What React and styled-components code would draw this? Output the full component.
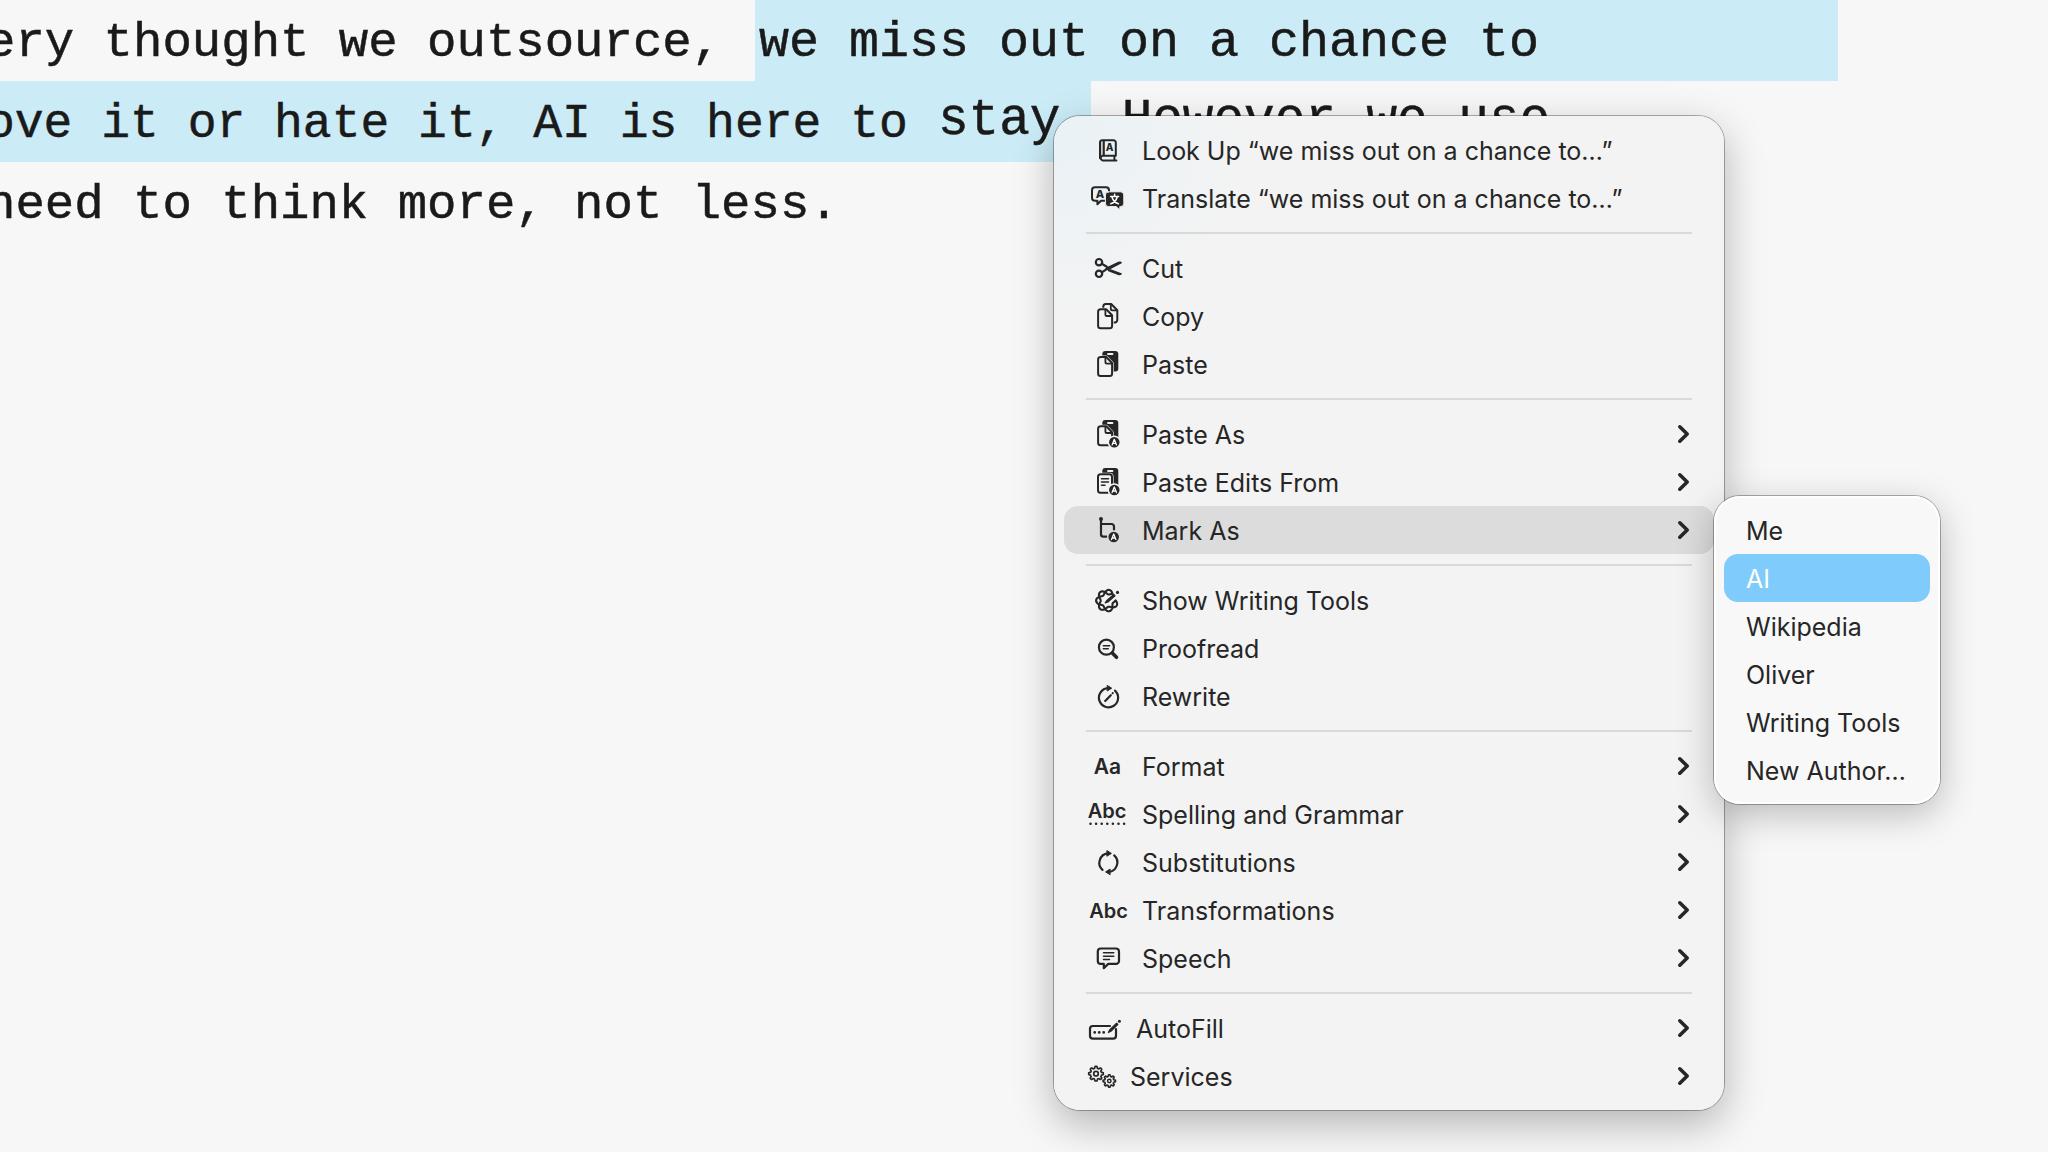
import React from "react";
import styled, { createGlobalStyle, css } from "styled-components";

const INK = "#262626";
const PANEL = "#f3f3f3";

const GlobalStyle = createGlobalStyle`
  * { box-sizing: border-box; }
  body { margin: 0; background: #f7f7f7; }
`;

const Page = styled.main`
  position: relative;
  min-height: 100vh;
  overflow: hidden;
  background: #f7f7f7;
`;

const Editor = styled.article`
  margin-left: -14px;
  font-family: "Liberation Mono", "Courier New", monospace;
  color: #1a1a1a;
`;

const Line = styled.p`
  display: flex;
  align-items: flex-start;
  height: 81px;
  margin: 0;
  white-space: pre;
`;

const Run = styled.span`
  flex: none;
  font-size: ${(p) => p.$size}px;
  line-height: ${(p) => (p.$raised ? 80 : 86)}px;
  -webkit-text-stroke: 0.5px currentColor;
`;

const Lead = styled(Run)`
  width: 769px;
`;

const Marked = styled(Run)`
  height: 81px;
  background: #cbecf7;
  ${(p) => p.$wide && css`width: 1083px; padding-left: 4px;`}
`;

const MarkedStart = styled(Marked)`
  width: 952px;
`;

const panel = css`
  position: absolute;
  display: flex;
  flex-direction: column;
  margin: 0;
  padding: 10px;
  list-style: none;
  font-family: Inter, "Liberation Sans", sans-serif;
  color: ${INK};
`;

const Menu = styled.ul`
  ${panel}
  top: 116px;
  left: 1054px;
  width: 670px;
  border-radius: 26px;
  background: radial-gradient(circle at 0 0, #e9f2f6 0, ${PANEL} 200px);
  box-shadow: 0 0 0 1px rgba(0, 0, 0, 0.3), 0 14px 40px rgba(0, 0, 0, 0.28);
`;

const SubMenu = styled.ul`
  ${panel}
  top: -10px;
  left: 100%;
  width: 226px;
  border-radius: 26px;
  background: #f8f8f8;
  box-shadow: inset 0 0 0 2px #ffffff, 0 0 0 1px rgba(0, 0, 0, 0.3), 0 10px 36px rgba(0, 0, 0, 0.25);
`;

const Entry = styled.li`
  position: relative;
`;

const Item = styled.button`
  display: flex;
  align-items: center;
  gap: 14px;
  width: 100%;
  height: 48px;
  margin: 0;
  padding: 0 24px;
  border: 0;
  border-radius: 14px;
  background: ${(p) => (p.$open ? "#dcdcdc" : "transparent")};
  font: inherit;
  font-size: 25px;
  line-height: 32px;
  color: inherit;
  text-align: left;
  white-space: nowrap;
`;

const SubItem = styled(Item)`
  padding: 0 22px;
  ${(p) => p.$chosen && css`background: #7fcbfb; color: #ffffff;`}
`;

const Label = styled.span`
  flex: 1;
  padding-top: 2px;
`;

const Divider = styled.li`
  height: 2px;
  margin: 10px 22px;
  background: #d9d9d9;
`;

const Icon = styled.svg`
  flex: none;
  width: ${(p) => p.$width || 40}px;
  height: 40px;
  overflow: visible;
  fill: none;
  stroke: ${INK};
  stroke-width: 2;
  stroke-linecap: round;
  stroke-linejoin: round;

  text {
    fill: ${INK};
    stroke: none;
    font-weight: 600;
    text-anchor: middle;
  }
`;

const Arrow = styled.svg`
  flex: none;
  width: 14px;
  height: 18px;
  overflow: visible;
  fill: none;
  stroke: ${INK};
  stroke-width: 3.6;
  stroke-linecap: round;
  stroke-linejoin: round;
`;

const Chevron = () => (
  <Arrow viewBox="0 0 14 18" aria-hidden="true">
    <path d="M3.8 1.8l7.400 7.200-7.400 7.200" />
  </Arrow>
);

const ring = (cx, cy, point, steps, from = 0, to = 1) => {
  const out = [];
  for (let i = 0; i <= steps; i += 1) {
    const t = (from + ((to - from) * i) / steps) * Math.PI * 2;
    const [x, y] = point(t);
    out.push(`${i ? "L" : "M"}${(cx + x).toFixed(2)} ${(cy + y).toFixed(2)}`);
  }
  return out.join("");
};

/* Two strands that cross seven times per turn; the last loop is left open. */
const strand = (side) =>
  ring(
    19,
    20.6,
    (t) => {
      const r = 8.6 + side * 2.3 * Math.sin(3.5 * t);
      return [r * Math.cos(t), r * Math.sin(t)];
    },
    160,
    0,
    6 / 7
  );

const gear = (cx, cy, r, depth, teeth) =>
  ring(
    cx,
    cy,
    (t) => {
      const d = r + depth * Math.max(-1, Math.min(1, 2 * Math.cos(teeth * t)));
      return [d * Math.cos(t), d * Math.sin(t)];
    },
    160
  );

const Badge = ({ x, y, bg = PANEL }) => (
  <>
    <circle cx={x} cy={y} r="6" fill={INK} stroke={bg} strokeWidth="1.5" />
    <path d={`M${x - 2.2} ${y + 2.6}l2.2-5.6 2.2 5.6m-3.6-1.6h2.8`} stroke="#fff" strokeWidth="1.3" />
  </>
);

const ClipBack = ({ y }) => (
  <>
    <rect x="14.3" y={y} width="16" height="20.5" rx="3" fill={INK} stroke="none" />
    <path d={`M20 ${y + 3}h4.5`} stroke={PANEL} strokeWidth="1.8" />
  </>
);

const pageShape = (y) =>
  `M12.5 ${y}h5.7l5.9 6v10.5a2.5 2.5 0 0 1-2.5 2.5h-9a2.5 2.5 0 0 1-2.500-2.500v-14a2.500 2.500 0 0 1 2.500-2.500z`;

const FrontPage = ({ y }) => (
  <>
    <path d={pageShape(y)} stroke={PANEL} strokeWidth="3.2" />
    <path d={pageShape(y)} fill={PANEL} />
    <path d={`M17.4 ${y + 0.5}v4.6a1.6 1.6 0 0 0 1.6 1.6h4.6`} strokeWidth="1.8" />
  </>
);

const icons = {
  book: (
    <>
      <path d="M15.6 11v14.6H12V12z" fill="#c4c6c7" stroke="none" />
      <path d="M12 28.2V12.6a2.4 2.4 0 0 1 2.4-2.4h11a2.4 2.4 0 0 1 2.4 2.4v13.2H14.4a2.4 2.4 0 0 0 0 4.6h14M15.8 10.4v15M26.4 26v4" />
      <text x="21.6" y="21.4" fontSize="10" style={{ fontWeight: 800 }}>A</text>
    </>
  ),
  translate: (
    <>
      <path d="M7 9.3h11a3 3 0 0 1 3 3v7.4a3 3 0 0 1-3 3h-5l-3.6 3.6v-3.6H7a3 3 0 0 1-3-3v-7.4a3 3 0 0 1 3-3z" />
      <text x="12" y="20" fontSize="11" style={{ fontWeight: 800 }}>A</text>
      <path d="M20.6 13.8h12a3.2 3.2 0 0 1 3.2 3.2v8.4a3.2 3.2 0 0 1-3.2 3.2h-.8v3.4l-3.6-3.4h-7.6a3.2 3.2 0 0 1-3.2-3.2V17a3.2 3.2 0 0 1 3.2-3.2z" fill={INK} stroke={PANEL} strokeWidth="1" />
      <path d="M26.6 16.2v2M22.6 18.6h8M29.2 19c-.8 3-3 5.6-6.4 6.8M24 19c.8 3 3 5.6 6.4 6.8" stroke="#fff" strokeWidth="1.5" />
    </>
  ),
  cut: (
    <>
      <circle cx="11" cy="14.2" r="3.2" strokeWidth="2.2" />
      <circle cx="11" cy="25.8" r="3.2" strokeWidth="2.2" />
      <path d="M13.8 15.8l5 3M13.8 24.3l6-4" strokeWidth="2.2" />
      <path d="M18 20.4l12.5-6c1.3-.5 2.4-.3 2.8.2l-13.3 7.2z" fill={INK} strokeWidth="1.2" />
      <path d="M22.5 21.8l10.8 4c-.8.9-2 1-3 .6l-9.8-3.8z" fill={INK} strokeWidth="1.2" />
    </>
  ),
  copy: (
    <>
      <path d="M17.8 8h5.4l6.1 6.2v9.8a2.5 2.5 0 0 1-2.5 2.5h-8.5a3 3 0 0 1-3-3V10.5a2.5 2.5 0 0 1 2.5-2.5z" />
      <path d="M22.8 8.5v4.3a1.6 1.6 0 0 0 1.6 1.6h4.3" strokeWidth="1.8" />
      <FrontPage y={13.3} />
    </>
  ),
  paste: (
    <>
      <ClipBack y={7} />
      <FrontPage y={13} />
    </>
  ),
  pasteAs: (
    <>
      <ClipBack y={6} />
      <FrontPage y={12.3} />
      <Badge x={26.3} y={28.3} />
    </>
  ),
  pasteEdits: (
    <>
      <ClipBack y={6} />
      <rect x="10" y="12.3" width="14" height="18.5" rx="2.5" stroke={PANEL} strokeWidth="3.2" />
      <rect x="10" y="12.3" width="14" height="18.5" rx="2.5" fill={PANEL} />
      <path d="M13.5 16.7h7M13.5 20h7M13.5 23.3h3.5" strokeWidth="1.5" />
      <Badge x={26.3} y={28} />
    </>
  ),
  mark: (
    <>
      <circle cx="13" cy="9" r="2" fill={INK} stroke="none" />
      <path d="M13 9v15.2a2.5 2.5 0 0 0 2.5 2.5h3M13 14h10.5a2.5 2.5 0 0 1 2.5 2.5v3.5" strokeWidth="2.2" />
      <Badge x={25.7} y={27} bg="#dcdcdc" />
    </>
  ),
  writing: (
    <>
      <path d={strand(1)} strokeWidth="2.1" />
      <path d={strand(-1)} strokeWidth="2.1" />
      <path d="M17.200 22.900l1.400-2.200 7.200-6.200 1.200 1.400-7.100 6.100z" fill={INK} strokeWidth="1.200" />
      <circle cx="29.5" cy="12.4" r="1.6" fill={INK} stroke="none" />
    </>
  ),
  proof: (
    <>
      <circle cx="18.4" cy="19.2" r="7.5" strokeWidth="2.2" />
      <path d="M24.5 25.3l4 4" strokeWidth="3.6" />
      <path d="M15.3 17.8h6.4M15.3 20.8h5" strokeWidth="1.5" />
    </>
  ),
  rewrite: (
    <>
      <path d="M27 14.6a9.6 9.6 0 1 1-7-2.5" strokeWidth="2.2" />
      <path d="M19.5 9.6l4.2 2.6-4.2 2.6z" fill={INK} strokeWidth="1" />
      <path d="M17.2 25l5.6-5.8" strokeWidth="2.2" />
      <path d="M24.6 17.2l.2-.2" />
    </>
  ),
  format: <text x="19.5" y="27.5" fontSize="21">Aa</text>,
  spelling: (
    <>
      <text x="19" y="24.3" fontSize="20">Abc</text>
      <path d="M2.5 29.7H37" strokeWidth="2.6" strokeDasharray="0 5.6" />
    </>
  ),
  substitute: (
    <>
      <path d="M20 11.4a9.5 9.5 0 0 0-5.5 16.5M20.6 29.9a9.5 9.5 0 0 0 5.6-16.5" strokeWidth="2.2" />
      <path d="M19.2 8.8l4.2 2.6-4.2 2.6z" fill={INK} strokeWidth="1" />
      <path d="M21.8 27.3l-4.2 2.6 4.2 2.6z" fill={INK} strokeWidth="1" />
    </>
  ),
  transform: <text x="20.5" y="27.5" fontSize="20">Abc</text>,
  speech: (
    <>
      <path d="M12.8 10.5h15.2a3 3 0 0 1 3 3v9.4a3 3 0 0 1-3 3h-7.8l-4.4 4.3v-4.3h-3a3 3 0 0 1-3-3v-9.4a3 3 0 0 1 3-3z" strokeWidth="2.2" />
      <path d="M15.5 14.8h10.3M15.5 18.2h10.3M15.5 21.5h6" strokeWidth="1.5" />
    </>
  ),
  autofill: (
    <>
      <path d="M22 18H4.8A2.8 2.8 0 0 0 2 20.8v7A2.8 2.8 0 0 0 4.8 30.6h20.4a2.8 2.8 0 0 0 2.8-2.8V21" strokeWidth="2.2" />
      <path d="M6.7 24.4h.01M11.2 24.4h.01M15.7 24.4h.01" strokeWidth="2.8" />
      <path d="M20.4 24.5l1.2-2.6 7-6.8 1.3 1.3-7 6.9z" fill={INK} strokeWidth="1.2" />
      <circle cx="31.4" cy="13.2" r="1.5" fill={INK} stroke="none" />
    </>
  ),
  services: (
    <>
      <path d={gear(8, 17.7, 6.4, 0.9, 8)} strokeWidth="1.7" />
      <circle cx="8" cy="17.7" r="2.3" strokeWidth="1.7" />
      <path d={gear(21.3, 25, 5.4, 0.8, 8)} strokeWidth="1.6" />
      <circle cx="21.3" cy="25" r="1.7" strokeWidth="1.5" />
    </>
  ),
};

const groups = [
  [
    { icon: "book", label: "Look Up “we miss out on a chance to…”" },
    { icon: "translate", label: "Translate “we miss out on a chance to…”" },
  ],
  [
    { icon: "cut", label: "Cut" },
    { icon: "copy", label: "Copy" },
    { icon: "paste", label: "Paste" },
  ],
  [
    { icon: "pasteAs", label: "Paste As", more: true },
    { icon: "pasteEdits", label: "Paste Edits From", more: true },
    {
      icon: "mark",
      label: "Mark As",
      more: true,
      children: ["Me", "AI", "Wikipedia", "Oliver", "Writing Tools", "New Author…"],
    },
  ],
  [
    { icon: "writing", label: "Show Writing Tools" },
    { icon: "proof", label: "Proofread" },
    { icon: "rewrite", label: "Rewrite" },
  ],
  [
    { icon: "format", label: "Format", more: true },
    { icon: "spelling", label: "Spelling and Grammar", more: true },
    { icon: "substitute", label: "Substitutions", more: true },
    { icon: "transform", label: "Transformations", more: true },
    { icon: "speech", label: "Speech", more: true },
  ],
  [
    { icon: "autofill", label: "AutoFill", more: true, iconWidth: 34 },
    { icon: "services", label: "Services", more: true, iconWidth: 28 },
  ],
];

const MenuEntry = ({ icon, label, more, children, iconWidth = 40 }) => (
  <Entry role="none">
    <Item type="button" role="menuitem" $open={Boolean(children)} aria-haspopup={more ? "menu" : undefined}>
      <Icon viewBox={`0 0 ${iconWidth} 40`} $width={iconWidth} aria-hidden="true">
        {icons[icon]}
      </Icon>
      <Label>{label}</Label>
      {more && <Chevron />}
    </Item>
    {children && (
      <SubMenu role="menu" aria-label={label}>
        {children.map((name) => (
          <li key={name} role="none">
            <SubItem type="button" role="menuitem" $chosen={name === "AI"}>
              <Label>{name}</Label>
            </SubItem>
          </li>
        ))}
      </SubMenu>
    )}
  </Entry>
);

export default function App() {
  return (
    <Page>
      <GlobalStyle />
      <Editor>
        <Line>
          <Lead $size={49}>ery thought we outsource, </Lead>
          <Marked $size={50} $wide>we miss out on a chance to</Marked>
        </Line>
        <Line>
          <MarkedStart $size={48}>ove it or hate it, AI is here to </MarkedStart>
          <Marked $size={51} $raised>stay.</Marked>
          <Run $size={51} $raised> However we use</Run>
        </Line>
        <Line>
          <Run $size={49}>need to think more, not less.</Run>
        </Line>
      </Editor>
      <Menu role="menu" aria-label="Text actions">
        {groups.map((group, i) => (
          <React.Fragment key={group[0].label}>
            {i > 0 && <Divider role="separator" />}
            {group.map((entry) => (
              <MenuEntry key={entry.label} {...entry} />
            ))}
          </React.Fragment>
        ))}
      </Menu>
    </Page>
  );
}
